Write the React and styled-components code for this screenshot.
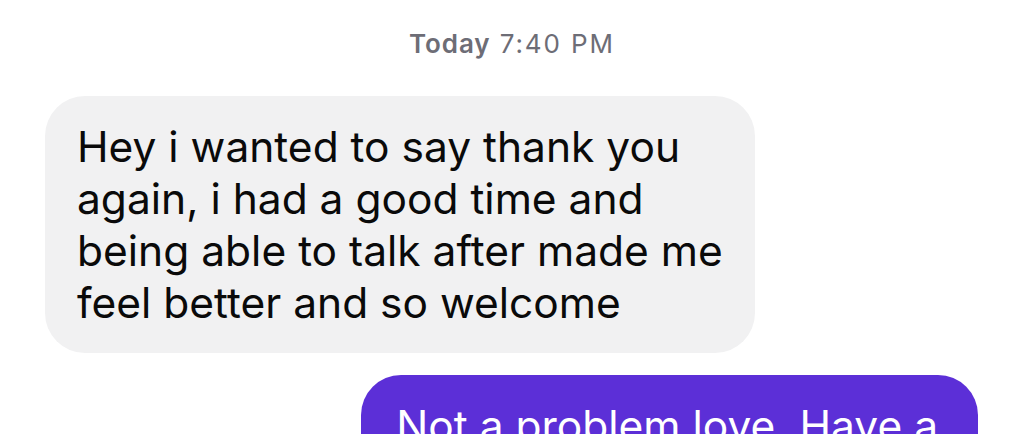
import styled, { createGlobalStyle } from "styled-components";

const GlobalStyle = createGlobalStyle`
  html, body {
    margin: 0;
    padding: 0;
    background: #ffffff;
  }
  body {
    font-family: "Inter", "Liberation Sans", sans-serif;
    -webkit-font-smoothing: antialiased;
  }
`;

const messages = [
  {
    id: 1,
    fromMe: false,
    text: "Hey i wanted to say thank you\nagain, i had a good time and\nbeing able to talk after made me\nfeel better and so welcome",
  },
  {
    id: 2,
    fromMe: true,
    text: "Not a problem love. Have a\ngood night",
  },
];

function App() {
  return (
    <>
      <GlobalStyle />
      <Thread>
        <Stamp>
          <StampDay>Today</StampDay> 7:40 PM
        </Stamp>
        {messages.map((m) => (
          <Row key={m.id} $fromMe={m.fromMe}>
            <Bubble $fromMe={m.fromMe}>{m.text}</Bubble>
          </Row>
        ))}
      </Thread>
    </>
  );
}

export default App;

const Thread = styled.div`
  height: 434px;
  overflow: hidden;
  display: flex;
  flex-direction: column;
  gap: 22px;
  padding: 28px 46px 0 45px;
  box-sizing: border-box;
`;

const Stamp = styled.div`
  text-align: center;
  font-size: 26px;
  line-height: 32px;
  letter-spacing: 1.9px;
  color: #6d6d76;
  margin-bottom: 14px;
  padding-left: 1px;
`;

const StampDay = styled.span`
  font-weight: 600;
  letter-spacing: 0.9px;
`;

const Row = styled.div`
  display: flex;
  justify-content: ${(p) => (p.$fromMe ? "flex-end" : "flex-start")};
`;

const Bubble = styled.div`
  white-space: pre-line;
  font-size: 42.5px;
  line-height: 52px;
  padding: ${(p) => (p.$fromMe ? "25px 40px 24px 35px" : "25px 32px 24px 32px")};
  border-radius: 40px;
  background: ${(p) => (p.$fromMe ? "#5c2fd7" : "#f1f1f2")};
  color: ${(p) => (p.$fromMe ? "#ffffff" : "#0a0a0a")};
  flex-shrink: 0;
`;
